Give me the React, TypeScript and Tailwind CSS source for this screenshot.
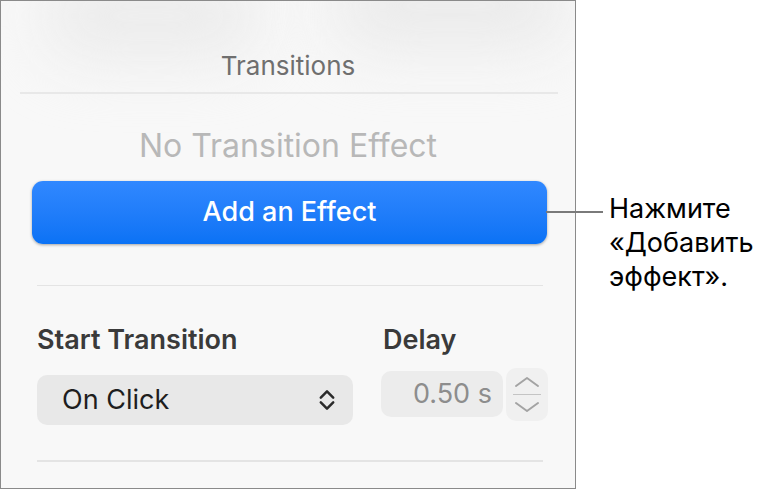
import React from "react";

const UpDownChevron: React.FC = () => (
  <svg width="16" height="24" viewBox="0 0 16 24" fill="none">
    <path d="M1.8 9.6 L8 3.4 L14.2 9.6" stroke="#2a2a2a" strokeWidth="2.5" strokeLinecap="round" strokeLinejoin="round" />
    <path d="M1.8 14.4 L8 20.6 L14.2 14.4" stroke="#2a2a2a" strokeWidth="2.5" strokeLinecap="round" strokeLinejoin="round" />
  </svg>
);

const Stepper: React.FC = () => (
  <div className="w-[42px] h-[53px] rounded-[10px] bg-[#f0f0f0] flex flex-col items-center justify-center">
    <svg width="28" height="14" viewBox="0 0 28 14" fill="none">
      <path d="M3 11 L14 3 L25 11" stroke="#a3a3a3" strokeWidth="2" strokeLinecap="round" strokeLinejoin="round" />
    </svg>
    <div className="w-[28px] h-[1.5px] bg-[#c4c4c4] my-[5px]" />
    <svg width="28" height="14" viewBox="0 0 28 14" fill="none">
      <path d="M3 3 L14 11 L25 3" stroke="#a3a3a3" strokeWidth="2" strokeLinecap="round" strokeLinejoin="round" />
    </svg>
  </div>
);

const App: React.FC = () => {
  return (
    <div className="w-[769px] h-[489px] bg-white flex font-['Inter','Noto_Sans',sans-serif] antialiased">
      {/* Inspector panel */}
      <div className="relative w-[576px] h-[489px] border border-[#8a8a8a] bg-[#f8f8f8] flex flex-col overflow-hidden">
        {/* soft blurred header backdrop */}
        <div className="absolute -top-[30px] left-[40px] w-[220px] h-[90px] rounded-full bg-[#ececec] blur-[30px] pointer-events-none" />
        <div className="absolute -top-[40px] left-[330px] w-[240px] h-[90px] rounded-full bg-[#ebebeb] blur-[30px] pointer-events-none" />

        <div className="relative mt-[50px] text-center text-[26px] leading-[30px] text-[#6f6f6f]">
          Transitions
        </div>
        <div className="relative mt-[11px] ml-[19px] mr-[17px] h-[1.5px] bg-[#e8e8e8]" />

        <div className="mt-[34px] text-center text-[32px] leading-[36px] text-[#b8b8b8]">
          No Transition Effect
        </div>

        <button className="mt-[17px] ml-[31px] mr-[28px] h-[63px] rounded-[11px] bg-gradient-to-b from-[#3088ff] to-[#0a72f5] shadow-[0_1px_3px_rgba(0,0,0,0.35)] text-white text-[27px] font-medium">
          Add an Effect
        </button>

        <div className="mt-[41px] ml-[36px] mr-[32px] h-[1.5px] bg-[#e4e4e4]" />

        <div className="mt-[38px] ml-[36px] flex gap-[28px]">
          <div className="w-[316px] flex flex-col">
            <div className="text-[27px] leading-[32px] font-semibold text-[#3a3a3a]">Start Transition</div>
            <div className="mt-[19px] h-[50px] rounded-[10px] bg-[#e8e8e8] flex items-center pl-[25px] pr-[18px]">
              <span className="flex-1 text-[27px] text-[#1e1e1e]">On Click</span>
              <UpDownChevron />
            </div>
          </div>
          <div className="flex flex-col">
            <div className="ml-[2px] text-[27px] leading-[32px] font-semibold text-[#3a3a3a]">Delay</div>
            <div className="mt-[12px] flex items-start gap-[3px]">
              <div className="mt-[3px] w-[122px] h-[46px] rounded-[10px] bg-[#ececec] flex items-center justify-end pr-[11px] text-[27px] text-[#8d8d8d]">
                0.50 s
              </div>
              <Stepper />
            </div>
          </div>
        </div>

        <div className="mt-[35px] ml-[36px] mr-[32px] h-[1.5px] bg-[#e4e4e4]" />
      </div>

      {/* Callout */}
      <div className="relative flex-1">
        <div className="absolute top-[211px] -left-[30px] w-[57px] h-[1.5px] bg-[#7a7a7a]" />
        <div className="mt-[192px] ml-[33px] text-[27px] leading-[34px] text-black">
          Нажмите
          <br />
          «Добавить
          <br />
          эффект».
        </div>
      </div>
    </div>
  );
};

export default App;
